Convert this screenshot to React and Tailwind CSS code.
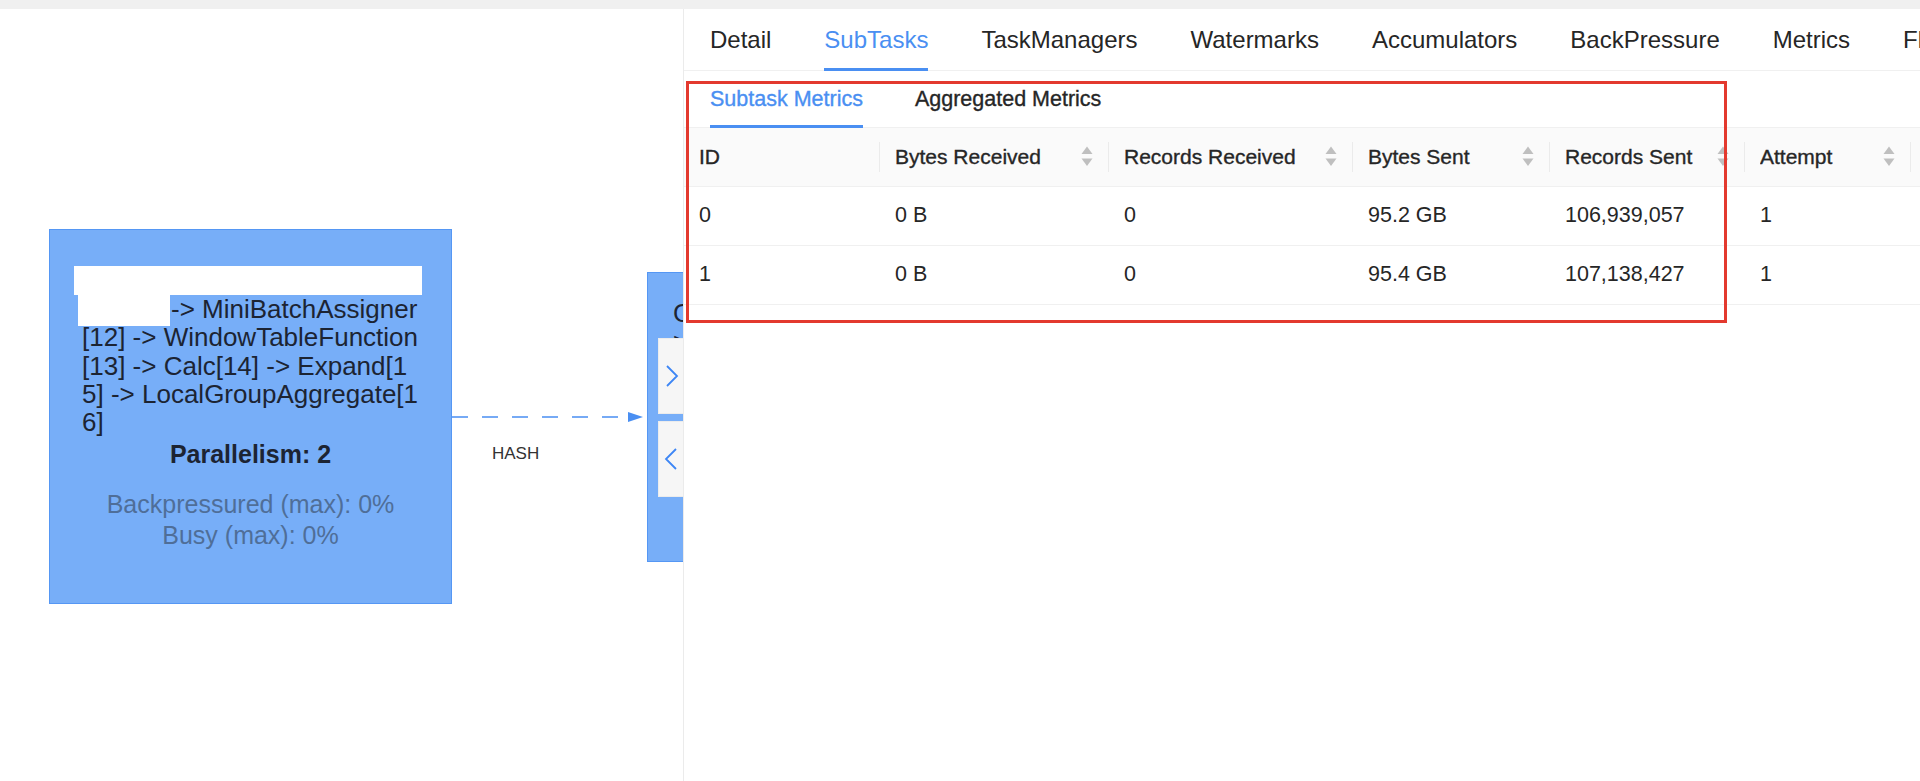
import React from "react";

const tabs = [
  "Detail",
  "SubTasks",
  "TaskManagers",
  "Watermarks",
  "Accumulators",
  "BackPressure",
  "Metrics",
  "FlameGraph",
];

const columns = [
  { title: "ID", w: 196, sort: false },
  { title: "Bytes Received", w: 229, sort: true },
  { title: "Records Received", w: 244, sort: true },
  { title: "Bytes Sent", w: 197, sort: true },
  { title: "Records Sent", w: 195, sort: true },
  { title: "Attempt", w: 166, sort: true },
  { title: "Start Time", w: 230, sort: true },
];

const rows = [
  ["0", "0 B", "0", "95.2 GB", "106,939,057", "1", "2024-05-21 10:12:33"],
  ["1", "0 B", "0", "95.4 GB", "107,138,427", "1", "2024-05-21 10:12:33"],
];

function SortIcon() {
  return (
    <svg width="12" height="21" viewBox="0 0 12 21" className="shrink-0">
      <path d="M0.5 8 L6 0.5 L11.5 8 Z" fill="#bfbfbf" />
      <path d="M0.5 12.5 L6 20 L11.5 12.5 Z" fill="#bfbfbf" />
    </svg>
  );
}

function Chevron({ dir }) {
  return (
    <svg width="14" height="24" viewBox="0 0 14 24">
      <path
        d={dir === "right" ? "M2 2 L12 12 L2 22" : "M12 2 L2 12 L12 22"}
        fill="none"
        stroke="#3d86f5"
        strokeWidth="1.8"
      />
    </svg>
  );
}

function GraphCanvas() {
  return (
    <div className="relative w-[683px] h-full shrink-0 overflow-hidden bg-white">
      {/* source node */}
      <div className="absolute left-[49px] top-[220px] w-[403px] h-[375px] bg-[#77aef8] border-[1.5px] border-[#5597f4] px-[32px] pt-[36px] text-[25px] text-[#1c2433]">
        <div className="text-[26px] leading-[28.3px] whitespace-nowrap">
          <div className="h-[29px] -ml-[8px] w-[348px] bg-white" />
          <div className="relative pl-[89px]">
            -&gt; MiniBatchAssigner
            <span className="absolute -left-[4px] top-0 w-[92px] h-[31px] bg-white" />
          </div>
          <div>[12] -&gt; WindowTableFunction</div>
          <div>[13] -&gt; Calc[14] -&gt; Expand[1</div>
          <div>5] -&gt; LocalGroupAggregate[1</div>
          <div>6]</div>
        </div>
        <div className="mt-[3px] text-center font-bold leading-[30px]">
          Parallelism: 2
        </div>
        <div className="mt-[20px] text-center leading-[31px] text-[#4f6e98]">
          <div>Backpressured (max): 0%</div>
          <div>Busy (max): 0%</div>
        </div>
      </div>

      {/* edge */}
      <svg
        className="absolute left-[452px] top-[400px]"
        width="195"
        height="16"
        viewBox="0 0 195 16"
      >
        <line
          x1="0"
          y1="8"
          x2="178"
          y2="8"
          stroke="#4a8ff2"
          strokeWidth="1.5"
          strokeDasharray="16 14"
        />
        <path d="M176 3 L191 8 L176 13 Z" fill="#4a8ff2" />
      </svg>
      <div className="absolute left-[492px] top-[436px] text-[17px] leading-[18px] text-[#333]">
        HASH
      </div>

      {/* target node */}
      <div className="absolute left-[647px] top-[263px] w-[300px] h-[290px] bg-[#77aef8] border-[1.5px] border-[#5597f4] pl-[25px] pt-[26px] text-[26px] leading-[29px] text-[#1c2433] whitespace-nowrap">
        <div>GlobalWindowAggregate</div>
        <div>&gt; Calc[19]</div>
      </div>

      {/* collapse buttons */}
      <div className="absolute left-[658px] top-[329px] w-[40px] h-[76px] bg-[#f6f6f6] border border-[#ececec] flex items-center pl-[6px]">
        <Chevron dir="right" />
      </div>
      <div className="absolute left-[658px] top-[412px] w-[40px] h-[76px] bg-[#f6f6f6] border border-[#ececec] flex items-center pl-[5px]">
        <Chevron dir="left" />
      </div>
    </div>
  );
}

function DetailPanel() {
  return (
    <div className="flex-1 h-full overflow-hidden bg-white border-l border-[#ebebeb] flex flex-col">
      {/* main tabs */}
      <div className="h-[62px] shrink-0 border-b border-[#f0f0f0] flex items-stretch gap-[53px] pl-[26px] text-[24px] whitespace-nowrap">
        {tabs.map((t) => (
          <div
            key={t}
            className={
              "relative flex items-center " +
              (t === "SubTasks" ? "text-[#4a8ff2]" : "text-[#262626]")
            }
          >
            {t}
            {t === "SubTasks" && (
              <span className="absolute left-0 right-0 -bottom-px h-[3px] bg-[#4a8ff2]" />
            )}
          </div>
        ))}
      </div>

      {/* sub tabs */}
      <div className="h-[57px] shrink-0 border-b border-[#f0f0f0] flex items-stretch gap-[52px] pl-[26px] text-[21.5px] font-medium [-webkit-text-stroke:0.35px_currentColor] whitespace-nowrap">
        <div className="relative flex items-center text-[#4a8ff2]">
          Subtask Metrics
          <span className="absolute left-0 right-0 -bottom-px h-[3px] bg-[#4a8ff2]" />
        </div>
        <div className="flex items-center text-[#262626]">Aggregated Metrics</div>
      </div>

      {/* table */}
      <table className="table-fixed border-collapse w-[1457px] text-[21.5px] text-[#262626]">
        <colgroup>
          {columns.map((c) => (
            <col key={c.title} style={{ width: c.w }} />
          ))}
        </colgroup>
        <thead>
          <tr>
            {columns.map((c) => (
              <th
                key={c.title}
                className="h-[58px] p-0 pl-[15px] bg-[#fafafa] border-b border-[#f0f0f0] text-left text-[21px] font-medium"
              >
                <div className="flex items-center">
                  <span className="flex-1 truncate [-webkit-text-stroke:0.35px_currentColor]">
                    {c.title}
                  </span>
                  {c.sort && <SortIcon />}
                  <span className="ml-[15px] w-px h-[30px] bg-[#ebebeb] shrink-0" />
                </div>
              </th>
            ))}
          </tr>
        </thead>
        <tbody>
          {rows.map((r) => (
            <tr key={r[0]}>
              {r.map((v, i) => (
                <td
                  key={i}
                  className="h-[59px] p-0 pl-[15px] border-b border-[#f0f0f0] whitespace-nowrap"
                >
                  {v}
                </td>
              ))}
            </tr>
          ))}
        </tbody>
      </table>
    </div>
  );
}

export default function App() {
  return (
    <div
      className="relative w-[1920px] h-[781px] overflow-hidden bg-white flex flex-col"
      style={{ fontFamily: '"Liberation Sans", Arial, sans-serif' }}
    >
      <div className="h-[9px] shrink-0 bg-[#f0f0f0]" />
      <div className="flex-1 flex min-h-0">
        <GraphCanvas />
        <DetailPanel />
      </div>

      {/* annotation box */}
      <div className="absolute left-[686px] top-[81px] w-[1041px] h-[242px] border-[3px] border-[#e3392e] pointer-events-none" />
    </div>
  );
}
